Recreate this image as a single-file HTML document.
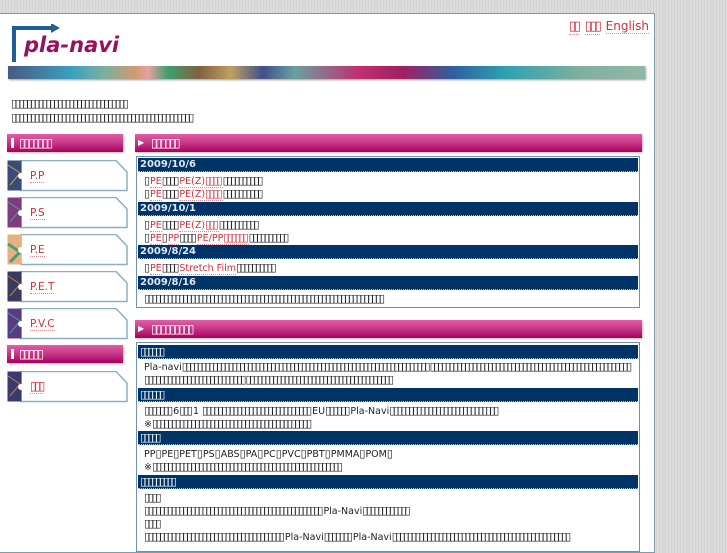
<!DOCTYPE html>
<html><head><meta charset="utf-8"><style>
*{margin:0;padding:0;box-sizing:border-box}
body{width:727px;height:545px;overflow:hidden;background:repeating-linear-gradient(90deg,#dcdcdc 0 2px,#d2d2d2 2px 3px);font-family:"DejaVu Sans","Liberation Sans",sans-serif;font-size:10px;color:#222;position:relative}
.wrap{position:absolute;left:0;top:13px;width:655px;height:540px;background:#fff;border:1px solid #7d9cb0;border-left:none}
.a{position:absolute}
.t{letter-spacing:-2.2px;font-size:11px;margin-right:2.2px}
.r{color:#d0303a;border-bottom:1px dotted #e08a90}
.hd{position:absolute;height:18px;background:linear-gradient(#e060a8,#c02c80 60%,#a8005c);color:#fff;font-size:11px;line-height:18px;box-shadow:1px 1px 2px #bbb}
.hd .t{font-size:12px;letter-spacing:-2px;margin-right:2px}
.dr{position:absolute;left:138px;width:500px;height:14px;background:#003366;color:#dfe6ee;font-weight:bold;font-size:10px;line-height:14px;padding-left:2px;border-bottom:1px dotted #e9a9b4}
.dr .t{color:#fff}
.ln{position:absolute;left:144px;white-space:nowrap;line-height:13px;font-size:9.5px}
.box{position:absolute;left:136px;width:504px;border:1px solid #7090b0}
.nav{position:absolute;left:7px;width:122px;height:32px}
</style></head><body>
<div class="wrap">
<svg class="a" style="left:11px;top:10px" width="50" height="40"><path d="M3 38V4h38" stroke="#1f5f95" stroke-width="4" fill="none"/><path d="M40 -1l9 5-9 5z" fill="#1f5f95"/></svg>
<div class="a" style="left:24px;top:19px;font:italic bold 21px 'DejaVu Sans',sans-serif;color:#9a105c">pla-navi</div>
<div class="a" style="right:5px;top:5px;font-size:12px"><span class="r t" style="font-size:13px">▯▯</span> <span class="r t" style="font-size:13px">▯▯▯</span> <span class="r">English</span></div>
<div class="a" style="left:8px;top:52px;width:637px;height:13px;background:linear-gradient(90deg,#4a5a80,#3aa0c0 10%,#7ab0a0 15%,#d09a70 20%,#e8a0a0 22%,#40a070 25%,#806040 30%,#c0a060 35%,#40508a 40%,#6aa0a0 45%,#c03070 55%,#a02060 62%,#3060a0 70%,#30a0b0 78%,#7fb0a0 90%,#90b8a8);box-shadow:1px 1px 2px #999"></div>
<div class="a" style="left:11px;top:83px;line-height:13px"><span class="t">▯▯▯▯▯▯▯▯▯▯▯▯▯▯▯▯▯▯▯▯▯▯▯▯▯▯▯▯▯▯</span><br><span class="t">▯▯▯▯▯▯▯▯▯▯▯▯▯▯▯▯▯▯▯▯▯▯▯▯▯▯▯▯▯▯▯▯▯▯▯▯▯▯▯▯▯▯▯▯▯▯▯</span></div>
</div>
<div class="hd" style="left:7px;top:134px;width:116px;padding-left:12px"><span class="a" style="left:4px;top:4px;width:3px;height:10px;background:#fff"></span><span class="t">▯▯▯▯▯▯▯</span></div>
<div class="hd" style="left:7px;top:345px;width:116px;padding-left:12px"><span class="a" style="left:4px;top:4px;width:3px;height:10px;background:#fff"></span><span class="t">▯▯▯▯▯</span></div>

<div class="nav" style="top:160px"><svg class="a" width="122" height="32"><path d="M14 .5H109L120 12V30.5H14Z" fill="#fff" stroke="#8ab0c2" stroke-width="1.5"/><rect x=".5" y=".5" width="14" height="30" fill="#3a4a7a"/><path d="M1 5l12 8-10 12" stroke="#c8a040" fill="none"/><circle cx="14" cy="16" r="3" fill="#fff"/></svg><span class="a r" style="left:23px;top:10px;font-size:10.5px">P.P</span></div>
<div class="nav" style="top:197px"><svg class="a" width="122" height="32"><path d="M14 .5H109L120 12V30.5H14Z" fill="#fff" stroke="#8ab0c2" stroke-width="1.5"/><rect x=".5" y=".5" width="14" height="30" fill="#803a80"/><path d="M1 5l12 8-10 12" stroke="#40a0a0" fill="none"/><circle cx="14" cy="16" r="3" fill="#fff"/></svg><span class="a r" style="left:23px;top:10px;font-size:10.5px">P.S</span></div>
<div class="nav" style="top:234px"><svg class="a" width="122" height="32"><path d="M14 .5H109L120 12V30.5H14Z" fill="#fff" stroke="#8ab0c2" stroke-width="1.5"/><rect x=".5" y=".5" width="14" height="30" fill="#e8b080"/><path d="M1 10l12 8-10 10" stroke="#40a080" stroke-width="3" fill="none"/><circle cx="14" cy="16" r="3" fill="#fff"/></svg><span class="a r" style="left:23px;top:10px;font-size:10.5px">P.E</span></div>
<div class="nav" style="top:271px"><svg class="a" width="122" height="32"><path d="M14 .5H109L120 12V30.5H14Z" fill="#fff" stroke="#8ab0c2" stroke-width="1.5"/><rect x=".5" y=".5" width="14" height="30" fill="#3a3a60"/><path d="M1 5l12 8-10 12" stroke="#c08040" fill="none"/><circle cx="14" cy="16" r="3" fill="#fff"/></svg><span class="a r" style="left:23px;top:10px;font-size:10.5px">P.E.T</span></div>
<div class="nav" style="top:308px"><svg class="a" width="122" height="32"><path d="M14 .5H109L120 12V30.5H14Z" fill="#fff" stroke="#8ab0c2" stroke-width="1.5"/><rect x=".5" y=".5" width="14" height="30" fill="#5a3a80"/><path d="M1 5l12 8-10 12" stroke="#40a0c0" fill="none"/><circle cx="14" cy="16" r="3" fill="#fff"/></svg><span class="a r" style="left:23px;top:10px;font-size:10.5px">P.V.C</span></div>
<div class="nav" style="top:371px"><svg class="a" width="122" height="32"><path d="M14 .5H109L120 12V30.5H14Z" fill="#fff" stroke="#8ab0c2" stroke-width="1.5"/><rect x=".5" y=".5" width="14" height="30" fill="#3a3a70"/><path d="M1 5l12 8-10 12" stroke="#c08040" fill="none"/><circle cx="14" cy="16" r="3" fill="#fff"/></svg><span class="a r t" style="left:23px;top:8px;font-size:12px">▯▯▯</span></div>

<div class="hd" style="left:135px;top:134px;width:507px;padding-left:16px"><span class="a" style="left:3px;top:0;font-size:8px">▶</span><span class="t">▯▯▯▯▯▯</span></div>
<div class="box" style="top:156px;height:152px"></div>
<div class="dr" style="top:158px">2009/10/6</div>
<div class="ln" style="top:174px"><span class="t">▯</span><span class="r">PE</span><span class="t">▯▯▯▯</span><span class="r">PE(Z)<span class="t">▯▯▯▯</span></span><span class="t">▯▯▯▯▯▯▯▯▯▯</span></div>
<div class="ln" style="top:187px"><span class="t">▯</span><span class="r">PE</span><span class="t">▯▯▯▯</span><span class="r">PE(Z)<span class="t">▯▯▯▯</span></span><span class="t">▯▯▯▯▯▯▯▯▯▯</span></div>
<div class="dr" style="top:202px">2009/10/1</div>
<div class="ln" style="top:218px"><span class="t">▯</span><span class="r">PE</span><span class="t">▯▯▯▯</span><span class="r">PE(Z)<span class="t">▯▯▯</span></span><span class="t">▯▯▯▯▯▯▯▯▯▯</span></div>
<div class="ln" style="top:231px"><span class="t">▯</span><span class="r">PE</span><span class="t">▯</span><span class="r">PP</span><span class="t">▯▯▯▯</span><span class="r">PE/PP<span class="t">▯▯▯▯▯▯</span></span><span class="t">▯▯▯▯▯▯▯▯▯▯</span></div>
<div class="dr" style="top:245px">2009/8/24</div>
<div class="ln" style="top:261px"><span class="t">▯</span><span class="r">PE</span><span class="t">▯▯▯▯</span><span class="r">Stretch Film</span><span class="t">▯▯▯▯▯▯▯▯▯▯</span></div>
<div class="dr" style="top:276px">2009/8/16</div>
<div class="ln" style="top:292px"><span class="t">▯▯▯▯▯▯▯▯▯▯▯▯▯▯▯▯▯▯▯▯▯▯▯▯▯▯▯▯▯▯▯▯▯▯▯▯▯▯▯▯▯▯▯▯▯▯▯▯▯▯▯▯▯▯▯▯▯▯▯▯▯▯</span></div>

<div class="hd" style="left:135px;top:320px;width:507px;padding-left:16px"><span class="a" style="left:3px;top:0;font-size:8px">▶</span><span class="t">▯▯▯▯▯▯▯▯▯</span></div>
<div class="box" style="top:342px;height:210px"></div>
<div class="dr" style="top:345px;font-weight:normal"><span class="t">▯▯▯▯▯▯</span></div>
<div class="ln" style="top:360px">Pla-navi<span class="t">▯▯▯▯▯▯▯▯▯▯▯▯▯▯▯▯▯▯▯▯▯▯▯▯▯▯▯▯▯▯▯▯▯▯▯▯▯▯▯▯▯▯▯▯▯▯▯▯▯▯▯▯▯▯▯▯▯▯▯▯▯▯▯▯ ▯▯▯▯▯▯▯▯▯▯▯▯▯▯▯▯▯▯▯▯▯▯▯▯▯▯▯▯▯▯▯▯▯▯▯▯▯▯▯▯▯▯▯▯▯▯▯▯▯▯▯▯</span></div>
<div class="ln" style="top:373px"><span class="t">▯▯▯▯▯▯▯▯▯▯▯▯▯▯▯▯▯▯▯▯▯▯▯▯▯▯ ▯▯▯▯▯▯▯▯▯▯▯▯▯▯▯▯▯▯▯▯▯▯▯▯▯▯▯▯▯▯▯▯▯▯▯▯▯▯</span></div>
<div class="dr" style="top:388px;font-weight:normal"><span class="t">▯▯▯▯▯▯</span></div>
<div class="ln" style="top:404px"><span class="t">▯▯▯▯▯▯▯</span>6<span class="t">▯▯▯</span>1 <span class="t">▯▯▯▯▯▯▯▯▯▯▯▯▯▯▯▯▯▯▯▯▯▯▯▯▯▯▯▯</span>EU<span class="t">▯▯▯▯▯▯</span>Pla-Navi<span class="t">▯▯▯▯▯▯▯▯▯▯▯▯▯▯▯▯▯▯▯▯▯▯▯▯▯▯▯▯</span></div>
<div class="ln" style="top:417px">※<span class="t">▯▯▯▯▯▯▯▯▯▯▯▯▯▯▯▯▯▯▯▯▯▯▯▯▯▯▯▯▯▯▯▯▯▯▯▯▯▯▯▯▯</span></div>
<div class="dr" style="top:431px;font-weight:normal"><span class="t">▯▯▯▯▯</span></div>
<div class="ln" style="top:447px">PP<span class="t">▯</span>PE<span class="t">▯</span>PET<span class="t">▯</span>PS<span class="t">▯</span>ABS<span class="t">▯</span>PA<span class="t">▯</span>PC<span class="t">▯</span>PVC<span class="t">▯</span>PBT<span class="t">▯</span>PMMA<span class="t">▯</span>POM<span class="t">▯</span></div>
<div class="ln" style="top:460px">※<span class="t">▯▯▯▯▯▯▯▯▯▯▯▯▯▯▯▯▯▯▯▯▯▯▯▯▯▯▯▯▯▯▯▯▯▯▯▯▯▯▯▯▯▯▯▯▯▯▯▯▯</span></div>
<div class="dr" style="top:475px;font-weight:normal"><span class="t">▯▯▯▯▯▯▯▯▯</span></div>
<div class="ln" style="top:491px"><span class="t">▯▯▯▯</span></div>
<div class="ln" style="top:504px"><span class="t">▯▯▯▯▯▯▯▯▯▯▯▯▯▯▯▯▯▯▯▯▯▯▯▯▯▯▯▯▯▯▯▯▯▯▯▯▯▯▯▯▯▯▯▯▯▯</span>Pla-Navi<span class="t">▯▯▯▯▯▯▯▯▯▯▯▯</span></div>
<div class="ln" style="top:517px"><span class="t">▯▯▯▯</span></div>
<div class="ln" style="top:530px"><span class="t">▯▯▯▯▯▯▯▯▯▯▯▯▯▯▯▯▯▯▯▯▯▯▯▯▯▯▯▯▯▯▯▯▯▯▯▯</span>Pla-Navi<span class="t">▯▯▯▯▯▯▯</span>Pla-Navi<span class="t">▯▯▯▯▯▯▯▯▯▯▯▯▯▯▯▯▯▯▯▯▯▯▯▯▯▯▯▯▯▯▯▯▯▯▯▯▯▯▯▯▯▯▯▯▯▯</span></div>
</body></html>
